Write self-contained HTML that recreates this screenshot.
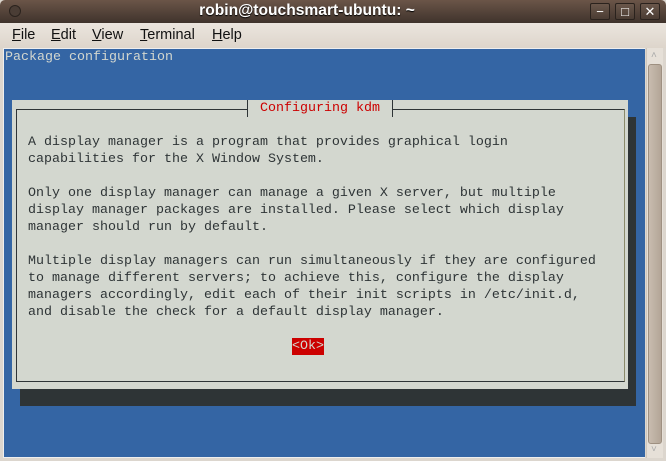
<!DOCTYPE html>
<html><head><style>
*{margin:0;padding:0;box-sizing:border-box}
body{width:666px;height:461px;overflow:hidden;background:#dcd6ce;position:relative;font-family:"Liberation Sans",sans-serif}
.title{position:absolute;left:0;top:0;width:666px;height:23px;background:linear-gradient(#6b5548,#3f332c);border-radius:5px 5px 0 0}
.tt{position:absolute;left:198px;top:0;width:218px;color:#fff;font-weight:bold;font-size:15.6px;text-align:center;line-height:22px;text-shadow:0 1px 1px #000;white-space:nowrap}
.dot{position:absolute;left:9px;top:5px;width:12px;height:12px;border-radius:6px;border:1px solid #2a221d;background:#4a3d35}
.btn{position:absolute;top:3px;width:20px;height:17px;border:1px solid #2a221d;border-radius:2px;background:linear-gradient(#6a574b,#4a3c33);color:#fff;font-size:13px;line-height:15px;text-align:center}
.menu{position:absolute;left:0;top:23px;width:666px;height:25px;background:linear-gradient(#ebe5de,#ddd5cb);font-size:14.5px;color:#111}
.menu span{position:absolute;top:4px}
.menu u{text-decoration:underline}
.term{position:absolute;left:3px;top:48px;width:642px;height:410px;background:#3465a4;border:1px solid #eee;border-right:none}
.scroll{position:absolute;left:646px;top:48px;width:17px;height:410px;background:#e6e0d8;border-left:1px solid #cfc7bc}
.thumb{position:absolute;left:1px;top:16px;width:14px;height:380px;background:linear-gradient(90deg,#c8bcaf,#b3a597);border:1px solid #9e9081;border-radius:3px}
.mono{font-family:"Liberation Mono",monospace;font-size:13.33px;line-height:17px;white-space:pre;position:absolute}
.shadow{position:absolute;left:20px;top:117px;width:616px;height:289px;background:#2e3436}
.dlg{position:absolute;left:12px;top:100px;width:616px;height:289px;background:#d3d7cf}
.frame{position:absolute;left:16px;top:109px;width:609px;height:273px;border:1px solid #2e3436;border-right-color:#8a8a6a}
.ttl{position:absolute;left:247px;top:100px;width:146px;height:17px;background:#d3d7cf;border-left:1px solid #2e3436;border-right:1px solid #2e3436}
</style></head><body>
<div class="title"><div class="tt">robin@touchsmart-ubuntu: ~</div><div class="dot"></div>
<div class="btn" style="left:590px">&#8722;</div><div class="btn" style="left:615px">&#9633;</div><div class="btn" style="left:640px">&#10005;</div></div>
<div class="menu"><span style="left:12px"><u>F</u>ile</span><span style="left:51px"><u>E</u>dit</span><span style="left:92px"><u>V</u>iew</span><span style="left:140px"><u>T</u>erminal</span><span style="left:212px"><u>H</u>elp</span></div>
<div class="term"></div>
<div class="scroll"><div style="position:absolute;left:4px;top:2px;color:#aaa;font-size:10px">&#708;</div><div class="thumb"></div><div style="position:absolute;left:4px;top:396px;color:#aaa;font-size:10px">&#709;</div></div>
<div class="mono" style="left:5px;top:49px;color:#d3d7cf">Package configuration</div>
<div class="shadow"></div>
<div class="dlg"></div>
<div class="frame"></div>
<div class="ttl"></div>
<div class="mono" style="left:260px;top:100px;color:#cc0000">Configuring kdm</div>
<div class="mono" style="left:28px;top:134px;color:#2e3436">A display manager is a program that provides graphical login
capabilities for the X Window System.

Only one display manager can manage a given X server, but multiple
display manager packages are installed. Please select which display
manager should run by default.

Multiple display managers can run simultaneously if they are configured
to manage different servers; to achieve this, configure the display
managers accordingly, edit each of their init scripts in /etc/init.d,
and disable the check for a default display manager.</div>
<div class="mono" style="left:292px;top:338px;width:32px;height:17px;background:#cc0000;color:#d3d7cf;line-height:18px">&lt;Ok&gt;</div>
</body></html>
